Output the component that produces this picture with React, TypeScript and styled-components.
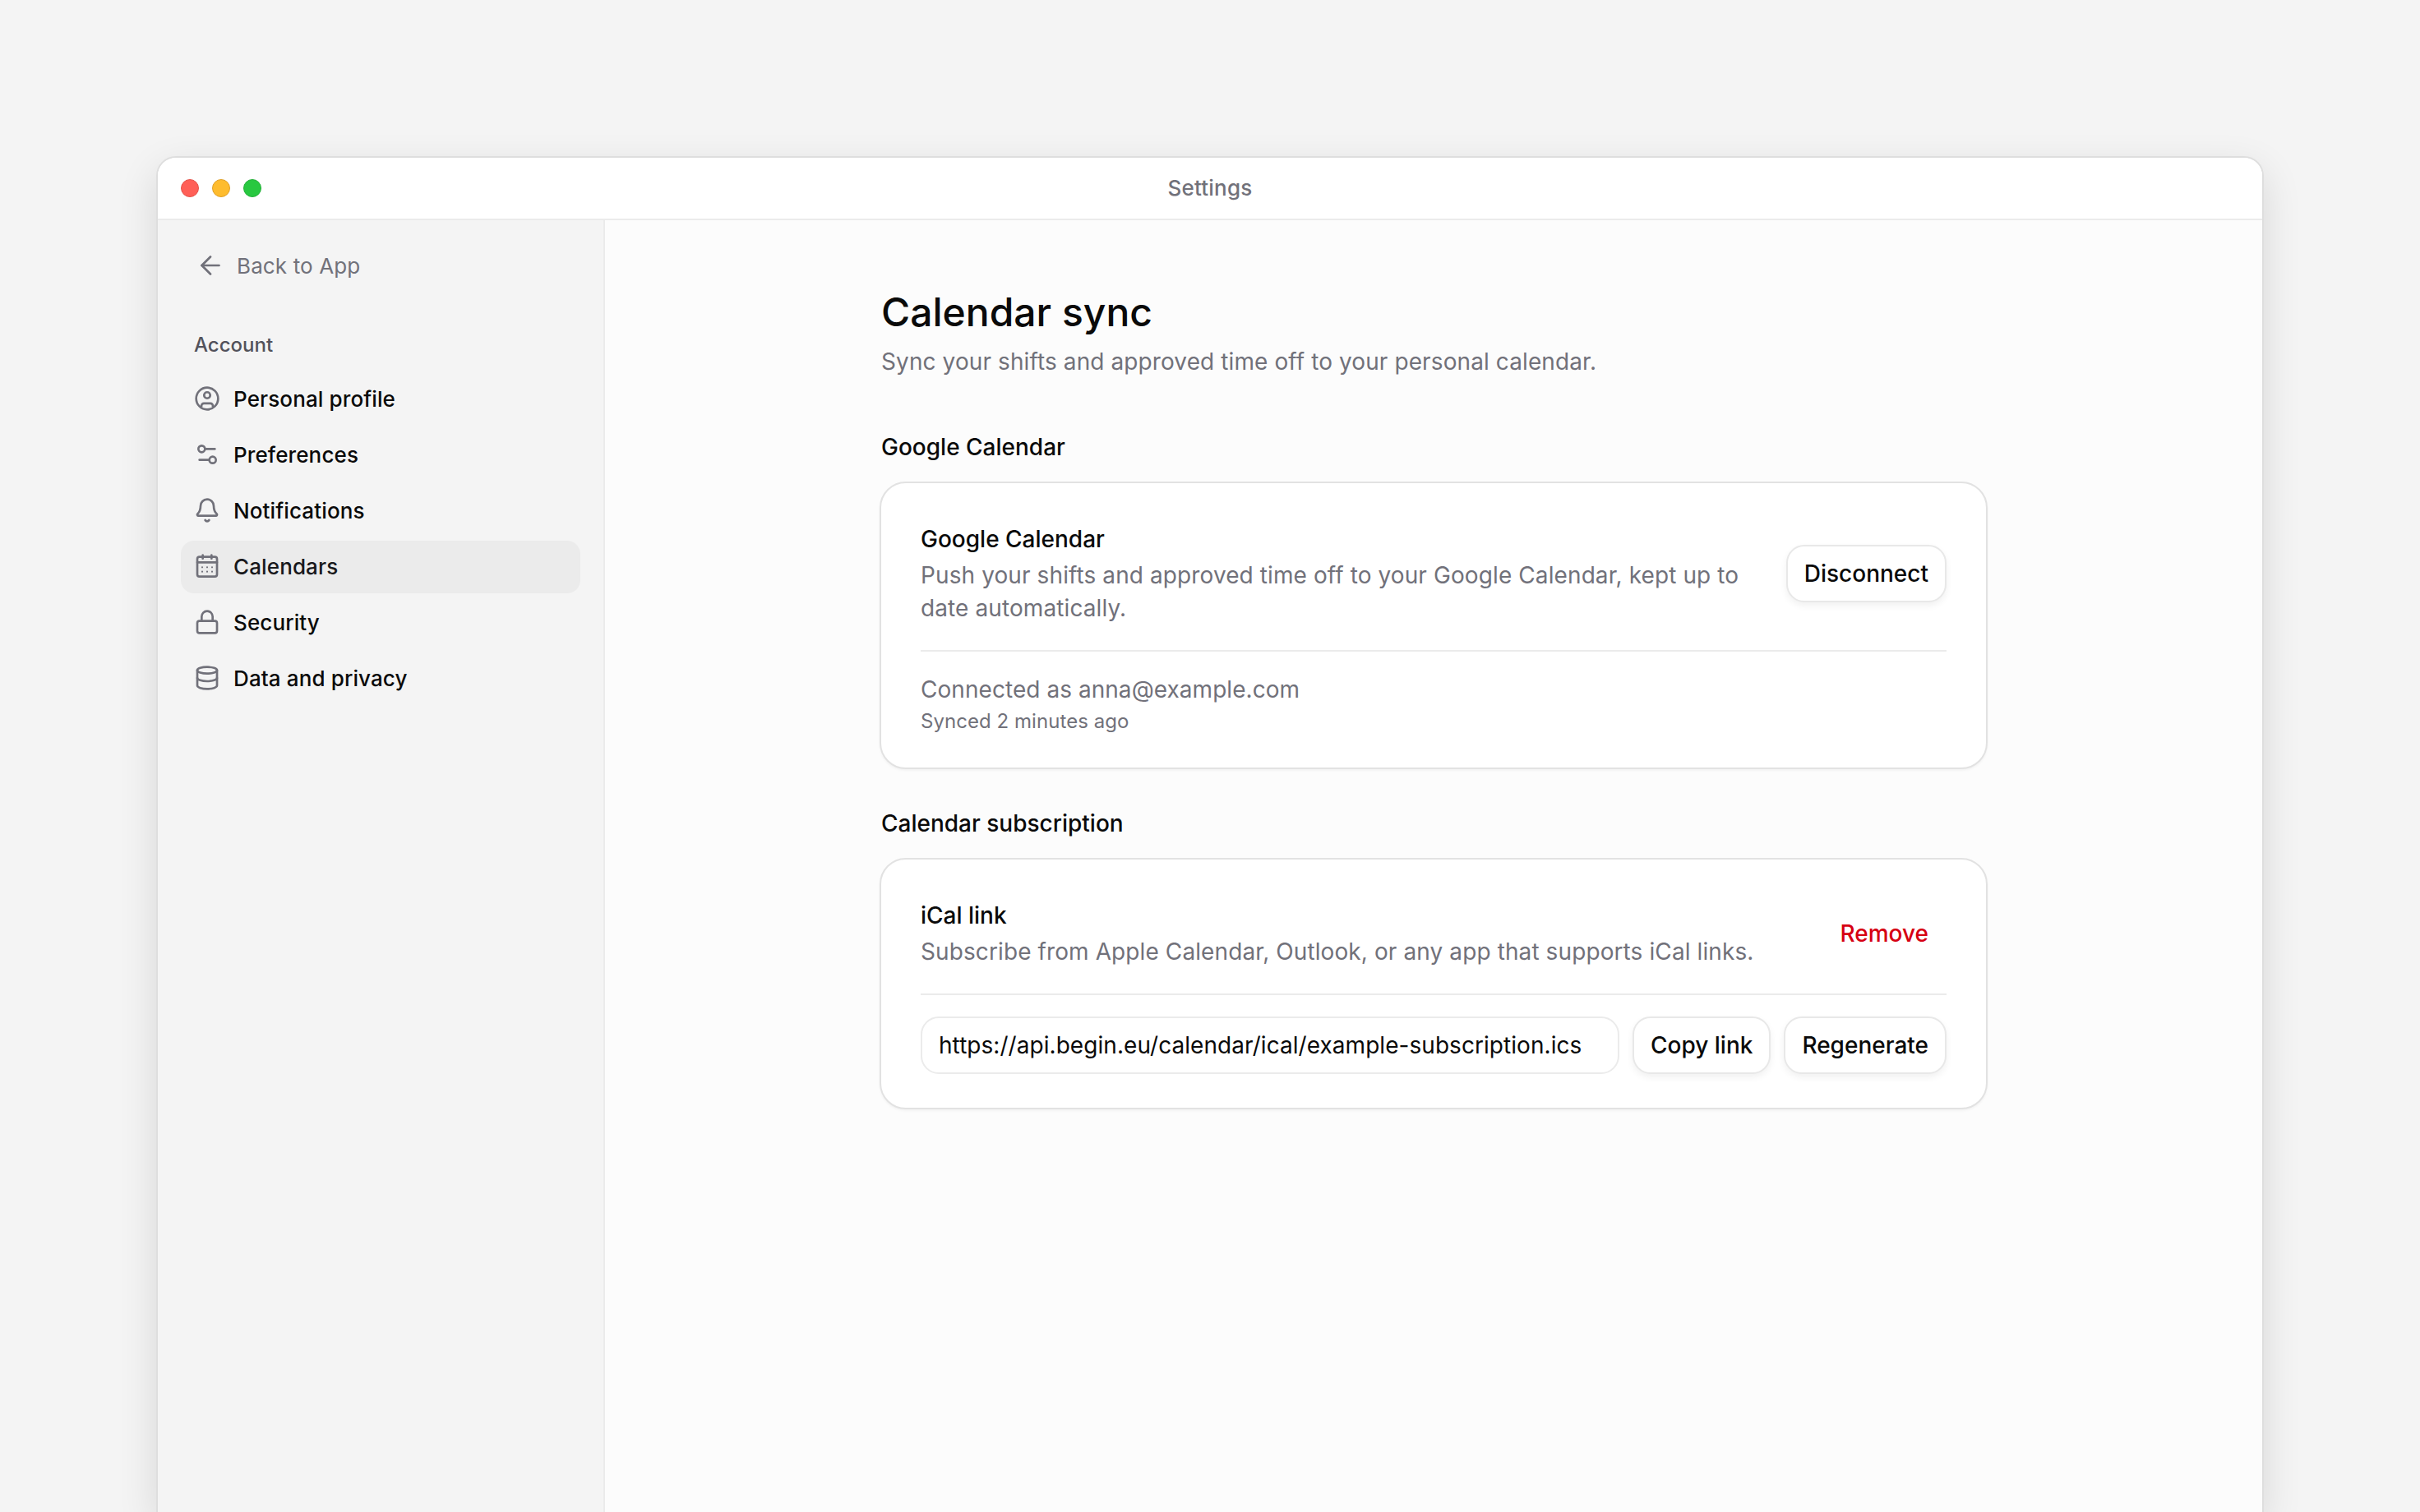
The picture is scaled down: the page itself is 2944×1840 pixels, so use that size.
import React from "react";
import styled, { createGlobalStyle } from "styled-components";
import { Settings2, Bell, Lock, Database, ArrowLeft } from "lucide-react";

const Global = createGlobalStyle`
  html, body { margin: 0; padding: 0; height: 1840px; overflow: hidden; background: #f4f4f4; }
  * { box-sizing: border-box; }
  body { font-family: Inter, "Noto Sans", sans-serif; color: #0a0a0a; -webkit-font-smoothing: antialiased; }
`;

const Page = styled.div`
  height: 1840px;
  padding-top: 190px;
  background: #f4f4f4;
  display: flex;
  justify-content: center;
`;
const Window = styled.div`
  width: 2564px;
  height: 1650px;
  display: flex;
  flex-direction: column;
  border: 2px solid #dedede;
  border-bottom: none;
  border-radius: 24px 24px 0 0;
  background: #fff;
  overflow: hidden;
  box-shadow: 0 16px 48px rgba(0, 0, 0, 0.12);
`;
const TitleBar = styled.header`
  height: 76px;
  flex: none;
  display: grid;
  grid-template-columns: 1fr auto 1fr;
  align-items: center;
  padding: 0 28px 1px;
  background: #fff;
  border-bottom: 2px solid #ebebeb;
`;
const Lights = styled.div`
  display: flex;
  gap: 16px;
`;
const Light = styled.span<{ $c: string; $b: string }>`
  width: 22px;
  height: 22px;
  border-radius: 50%;
  background: ${(p) => p.$c};
  border: 1px solid ${(p) => p.$b};
`;
const WindowTitle = styled.div`
  font-size: 26px;
  letter-spacing: 0.2px;
  font-weight: 500;
  color: #71717a;
`;
const Body = styled.div`
  flex: 1;
  display: flex;
  min-height: 0;
`;
const Sidebar = styled.nav`
  width: 544px;
  flex: none;
  background: #f4f4f4;
  border-right: 2px solid #ebebeb;
  padding: 27px 28px 0 28px;
  display: flex;
  flex-direction: column;
`;
const Back = styled.div`
  height: 56px;
  display: flex;
  align-items: center;
  gap: 14px;
  padding-left: 18px;
  color: #71717a;
  font-size: 26px;
  letter-spacing: 0.12px;
`;
const GroupLabel = styled.div`
  margin-top: 49px;
  padding-left: 16px;
  height: 40px;
  line-height: 40px;
  font-size: 24px;
  font-weight: 500;
  color: #52525b;
`;
const NavList = styled.div`
  margin-top: 14px;
  display: flex;
  flex-direction: column;
  gap: 4px;
`;
const NavItem = styled.div<{ $active?: boolean }>`
  height: 64px;
  display: flex;
  align-items: center;
  gap: 16px;
  padding: 0 16px 2px;
  border-radius: 16px;
  font-size: 26px;
  letter-spacing: 0.12px;
  font-weight: 500;
  background: ${(p) => (p.$active ? "#ebebeb" : "transparent")};
  color: ${(p) => (p.$active ? "#18181b" : "#0a0a0a")};
  svg { flex: none; color: #71717a; }
`;
const Main = styled.main`
  flex: 1;
  background: #fcfcfc;
  display: flex;
  justify-content: center;
  padding-top: 76px;
`;
const Content = styled.div`
  width: 1344px;
`;
const Heading = styled.h1`
  margin: 0;
  font-size: 48px;
  line-height: 72px;
  font-weight: 500;
  color: #0a0a0a;
`;
const Sub = styled.p`
  margin: 4px 0 0;
  font-size: 28px;
  letter-spacing: 0.1px;
  line-height: 40px;
  color: #71717a;
`;
const SectionTitle = styled.h2<{ $gap: number }>`
  margin: ${(p) => p.$gap}px 0 0;
  font-size: 28px;
  line-height: 40px;
  font-weight: 500;
`;
const Card = styled.section`
  margin: 22px -2px 0;
  background: #fff;
  border: 2px solid #e2e2e2;
  border-radius: 32px;
  padding: 0 48px;
  box-shadow: 0 2px 3px rgba(0, 0, 0, 0.04);
`;
const Row = styled.div`
  display: flex;
  align-items: center;
  gap: 48px;
  padding: 48px 0 31px;
  border-bottom: 2px solid #ebebeb;
`;
const RowText = styled.div`
  flex: 1;
  min-width: 0;
`;
const RowTitle = styled.div`
  font-size: 28px;
  line-height: 40px;
  font-weight: 500;
`;
const RowDesc = styled.div`
  font-size: 28px;
  letter-spacing: 0.1px;
  line-height: 40px;
  margin-top: 4px;
  color: #71717a;
`;
const Footer = styled.div`
  padding: 26px 0 38px;
`;
const Connected = styled.div`
  font-size: 28px;
  letter-spacing: 0.05px;
  line-height: 40px;
  color: #71717a;
`;
const Synced = styled.div`
  font-size: 24px;
  letter-spacing: 0.05px;
  line-height: 36px;
  margin-top: 1px;
  color: #71717a;
`;
const Button = styled.button`
  flex: none;
  height: 70px;
  padding: 0 20px;
  background: #fff;
  border: 2px solid #e8e8e8;
  border-radius: 22px;
  font-family: inherit;
  font-size: 28px;
  font-weight: 500;
  color: #0a0a0a;
  box-shadow: 0 4px 8px rgba(0, 0, 0, 0.06);
`;
const GhostButton = styled(Button)`
  background: transparent;
  border-color: transparent;
  box-shadow: none;
  color: #d60012;
`;
const LinkRow = styled.div`
  display: flex;
  gap: 16px;
  padding: 26px 0 41px;
`;
const LinkField = styled.div`
  flex: 1;
  height: 70px;
  display: flex;
  align-items: center;
  padding: 0 20px;
  border: 2px solid #ebebeb;
  border-radius: 22px;
  font-size: 28px;
  letter-spacing: 0.05px;
  white-space: nowrap;
  color: #0a0a0a;
`;

const UserIcon = () => (
  <svg width="32" height="32" viewBox="0 0 24 24" fill="none" stroke="currentColor" strokeWidth="2">
    <circle cx="12" cy="12" r="10" />
    <circle cx="12" cy="9" r="2.8" />
    <path d="M6.8 19.6v-1a2.2 2.2 0 0 1 2.2-2.2h6a2.2 2.2 0 0 1 2.2 2.2v1" />
  </svg>
);
const CalendarIcon = () => (
  <svg width="32" height="32" viewBox="0 0 24 24" fill="none" stroke="currentColor" strokeWidth="2" strokeLinecap="round">
    <rect x="3" y="3.5" width="18" height="18" rx="2" />
    <path d="M3 8.5h18M8 2v3M16 2v3" />
    <path strokeWidth="1.6" d="M7.5 13h.01M12 13h.01M16.5 13h.01M7.5 17h.01M12 17h.01M16.5 17h.01" />
  </svg>
);

export default function App() {
  return (
    <Page>
      <Global />
      <Window>
        <TitleBar>
          <Lights>
            <Light $c="#ff5f57" $b="#e5534b" />
            <Light $c="#febc2e" $b="#e0a028" />
            <Light $c="#28c840" $b="#24b038" />
          </Lights>
          <WindowTitle>Settings</WindowTitle>
        </TitleBar>
        <Body>
          <Sidebar>
            <Back>
              <ArrowLeft size={36} strokeWidth={1.8} />
              Back to App
            </Back>
            <GroupLabel>Account</GroupLabel>
            <NavList>
              <NavItem><UserIcon />Personal profile</NavItem>
              <NavItem><Settings2 size={32} strokeWidth={2} />Preferences</NavItem>
              <NavItem><Bell size={32} strokeWidth={2} />Notifications</NavItem>
              <NavItem $active><CalendarIcon />Calendars</NavItem>
              <NavItem><Lock size={32} strokeWidth={2} />Security</NavItem>
              <NavItem><Database size={32} strokeWidth={2} />Data and privacy</NavItem>
            </NavList>
          </Sidebar>
          <Main>
            <Content>
              <Heading>Calendar sync</Heading>
              <Sub>Sync your shifts and approved time off to your personal calendar.</Sub>
              <SectionTitle $gap={64}>Google Calendar</SectionTitle>
              <Card>
                <Row>
                  <RowText>
                    <RowTitle>Google Calendar</RowTitle>
                    <RowDesc>Push your shifts and approved time off to your Google Calendar, kept up to date automatically.</RowDesc>
                  </RowText>
                  <Button>Disconnect</Button>
                </Row>
                <Footer>
                  <Connected>Connected as anna@example.com</Connected>
                  <Synced>Synced 2 minutes ago</Synced>
                </Footer>
              </Card>
              <SectionTitle $gap={46}>Calendar subscription</SectionTitle>
              <Card>
                <Row>
                  <RowText>
                    <RowTitle>iCal link</RowTitle>
                    <RowDesc>Subscribe from Apple Calendar, Outlook, or any app that supports iCal links.</RowDesc>
                  </RowText>
                  <GhostButton>Remove</GhostButton>
                </Row>
                <LinkRow>
                  <LinkField>https://api.begin.eu/calendar/ical/example-subscription.ics</LinkField>
                  <Button>Copy link</Button>
                  <Button>Regenerate</Button>
                </LinkRow>
              </Card>
            </Content>
          </Main>
        </Body>
      </Window>
    </Page>
  );
}
